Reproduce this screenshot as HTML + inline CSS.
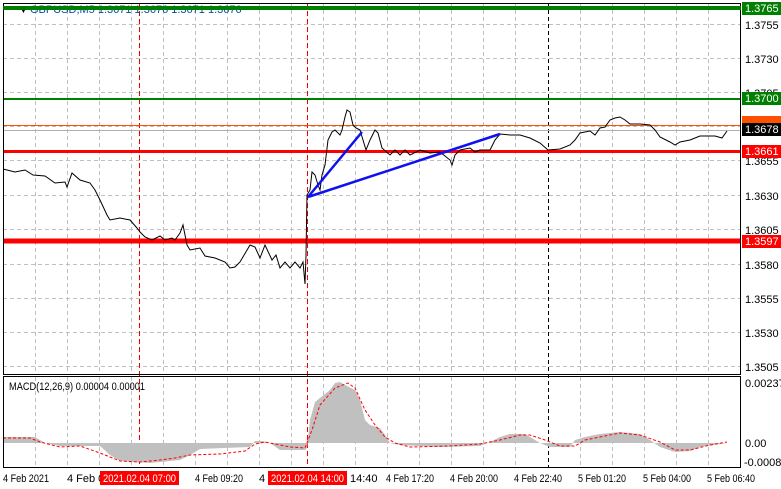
<!DOCTYPE html>
<html><head><meta charset="utf-8"><style>
html,body{margin:0;padding:0;background:#fff;width:781px;height:489px;overflow:hidden}
svg text{font-family:"Liberation Sans",sans-serif;font-size:11px}
</style></head><body>
<svg width="781" height="489" xmlns="http://www.w3.org/2000/svg">
<rect width="781" height="489" fill="#fff"/>
<g stroke="#c0c0c0" stroke-dasharray="4,3" stroke-width="1">
<path d="M3 24.5H741M3 58.5H741M3 92.5H741M3 126.5H741M3 160.5H741M3 195.5H741M3 229.5H741M3 264.5H741M3 298.5H741M3 332.5H741M3 366.5H741"/>
<path d="M35.5 3V374M67.5 3V374M99.5 3V374M131.5 3V374M163.5 3V374M195.5 3V374M227.5 3V374M259.5 3V374M291.5 3V374M323.5 3V374M355.5 3V374M387.5 3V374M419.5 3V374M451.5 3V374M483.5 3V374M515.5 3V374M580.5 3V374M612.5 3V374M644.5 3V374M676.5 3V374M708.5 3V374"/>
<path d="M35.5 377V467M67.5 377V467M99.5 377V467M131.5 377V467M163.5 377V467M195.5 377V467M227.5 377V467M259.5 377V467M291.5 377V467M323.5 377V467M355.5 377V467M387.5 377V467M419.5 377V467M451.5 377V467M483.5 377V467M515.5 377V467M580.5 377V467M612.5 377V467M644.5 377V467M676.5 377V467M708.5 377V467"/>
</g>
<g stroke="#e00" stroke-dasharray="5,3" stroke-width="1"><path d="M139.5 3V467M307.5 3V467"/></g>
<path d="M548.5 3V467" stroke="#000" stroke-dasharray="4,3"/>
<polygon fill="#c0c0c0" points="3,443 3,437 35,437 40,440 45,443 60,446 100,446 110,455 120,461 150,463 180,460 190,455 200,449 250,447 255,441 262,441 270,443 280,450 305,450 307,448 310,420 315,402 320,398 330,390 335,383 340,382 345,385 355,390 360,400 365,420 370,425 380,428 385,435 390,443 400,445 440,447 480,446 490,442 500,437 510,434 525,434 530,437 540,443 550,447 570,447 575,440 585,437 600,434 620,432 640,434 650,440 660,447 675,452 690,451 700,447 720,444 727,443"/>
<polyline fill="none" stroke="#f00" stroke-dasharray="3,2" points="3,438 30,438 40,442 60,447 80,446 100,453 120,461 140,462 160,460 175,458 190,455 220,454 245,451 255,444 265,442 275,444 290,447 305,448 312,430 320,405 335,388 348,383 355,388 365,410 375,425 385,437 395,443 410,447 450,446 480,444 500,440 520,435 530,435 545,440 560,446 575,446 585,440 600,437 620,433 640,435 660,442 675,450 690,450 710,445 727,442"/>
<path d="M3 8H741" stroke="#008000" stroke-width="4"/>
<path d="M3 99H741" stroke="#008000" stroke-width="2"/>
<path d="M3 125.5H741" stroke="#ff5000" stroke-width="1"/>
<path d="M3 130.5H741" stroke="#b0b0b0" stroke-width="1"/>
<path d="M3 151.5H741" stroke="#f00" stroke-width="3"/>
<path d="M3 241H741" stroke="#f00" stroke-width="5"/>
<polyline fill="none" stroke="#000" stroke-width="1" points="3,169 15,172 25,170 33,175 45,176 55,183 65,182 67,187 72,173 80,180 90,183 95,190 100,200 107,215 110,220 120,218 130,220 137,228 140,232 145,237 152,240 160,236 165,240 172,238 175,240 180,233 183,225 187,245 190,250 200,248 205,256 215,258 225,262 230,268 235,267 240,262 250,245 255,247 260,258 265,245 272,260 276,255 280,268 285,262 290,268 295,262 300,268 303,262 305,284 306,255 307,195 310,190 312,172 315,175 318,185 320,190 322,175 325,165 328,140 332,132 335,130 340,135 342,130 345,117 347,110 350,112 353,125 356,128 360,130 363,140 366,150 370,140 375,130 378,133 382,148 390,155 395,150 400,155 405,150 410,155 420,150 430,153 440,152 450,160 452,165 455,155 460,150 470,148 475,152 480,150 490,150 495,140 500,134 510,135 520,135 530,138 540,143 548,150 560,149 570,145 575,140 580,133 590,131 595,135 600,128 605,127 610,120 615,118 620,117 625,120 630,124 640,124 650,125 655,130 660,137 670,142 675,145 680,142 690,140 700,136 715,136 722,138 727,131"/>
<g stroke="#1010f0" stroke-width="2.5" fill="none"><path d="M308 197L362 132M308 197L500 134"/></g>
<rect x="3.5" y="3.5" width="737" height="371" fill="none" stroke="#000"/>
<rect x="3.5" y="376.5" width="737" height="91" fill="none" stroke="#000"/>
<text x="18" y="13" fill="#000" font-size="9">▼</text>
<text x="30" y="13" fill="#0050a0" font-size="10">GBPUSD,M5  1.3671 1.3676 1.3671 1.3676</text>
<path d="M3 8H741" stroke="#008000" stroke-width="4" opacity="0.9"/>
<text x="9" y="390" fill="#000" textLength="136" lengthAdjust="spacingAndGlyphs">MACD(12,26,9) 0.00004 0.00001</text>
<g fill="#000">
<text x="745" y="29">1.3755</text><text x="745" y="63">1.3730</text><text x="745" y="97">1.3705</text>
<text x="745" y="165">1.3655</text><text x="745" y="200">1.3630</text><text x="745" y="234">1.3605</text>
<text x="745" y="269">1.3580</text><text x="745" y="303">1.3555</text><text x="745" y="337">1.3530</text><text x="745" y="371">1.3505</text>
<text x="745" y="387">0.00237</text><text x="745" y="447">0.00</text><text x="744" y="466">-0.00088</text>
</g>
<rect x="742" y="2" width="39" height="13" fill="#008000"/><text x="745" y="12" fill="#fff">1.3765</text>
<rect x="742" y="92" width="39" height="13" fill="#008000"/><text x="745" y="102" fill="#fff">1.3700</text>
<rect x="742" y="116" width="39" height="8" fill="#ff5000"/>
<rect x="742" y="123" width="39" height="13" fill="#000"/><text x="745" y="133" fill="#fff">1.3678</text>
<rect x="742" y="145" width="39" height="13" fill="#f00"/><text x="745" y="155" fill="#fff">1.3661</text>
<rect x="742" y="235" width="39" height="13" fill="#f00"/><text x="745" y="245" fill="#fff">1.3597</text>
<g fill="#000">
<text x="3" y="482" textLength="46" lengthAdjust="spacingAndGlyphs">4 Feb 2021</text><text x="67" y="482">4 Feb 0</text>
<text x="195" y="482" textLength="48" lengthAdjust="spacingAndGlyphs">4 Feb 09:20</text><text x="259" y="482">4</text>
<text x="350" y="482">14:40</text>
<text x="386" y="482" textLength="48" lengthAdjust="spacingAndGlyphs">4 Feb 17:20</text><text x="450" y="482" textLength="48" lengthAdjust="spacingAndGlyphs">4 Feb 20:00</text>
<text x="514" y="482" textLength="48" lengthAdjust="spacingAndGlyphs">4 Feb 22:40</text><text x="578" y="482" textLength="48" lengthAdjust="spacingAndGlyphs">5 Feb 01:20</text><text x="643" y="482" textLength="48" lengthAdjust="spacingAndGlyphs">5 Feb 04:00</text><text x="707" y="482" textLength="48" lengthAdjust="spacingAndGlyphs">5 Feb 06:40</text>
</g>
<rect x="100" y="471" width="79" height="14" fill="#f00"/><text x="103" y="482" fill="#fff" textLength="73" lengthAdjust="spacingAndGlyphs">2021.02.04 07:00</text>
<rect x="268" y="471" width="79" height="14" fill="#f00"/><text x="271" y="482" fill="#fff" textLength="73" lengthAdjust="spacingAndGlyphs">2021.02.04 14:00</text>
</svg>
</body></html>
